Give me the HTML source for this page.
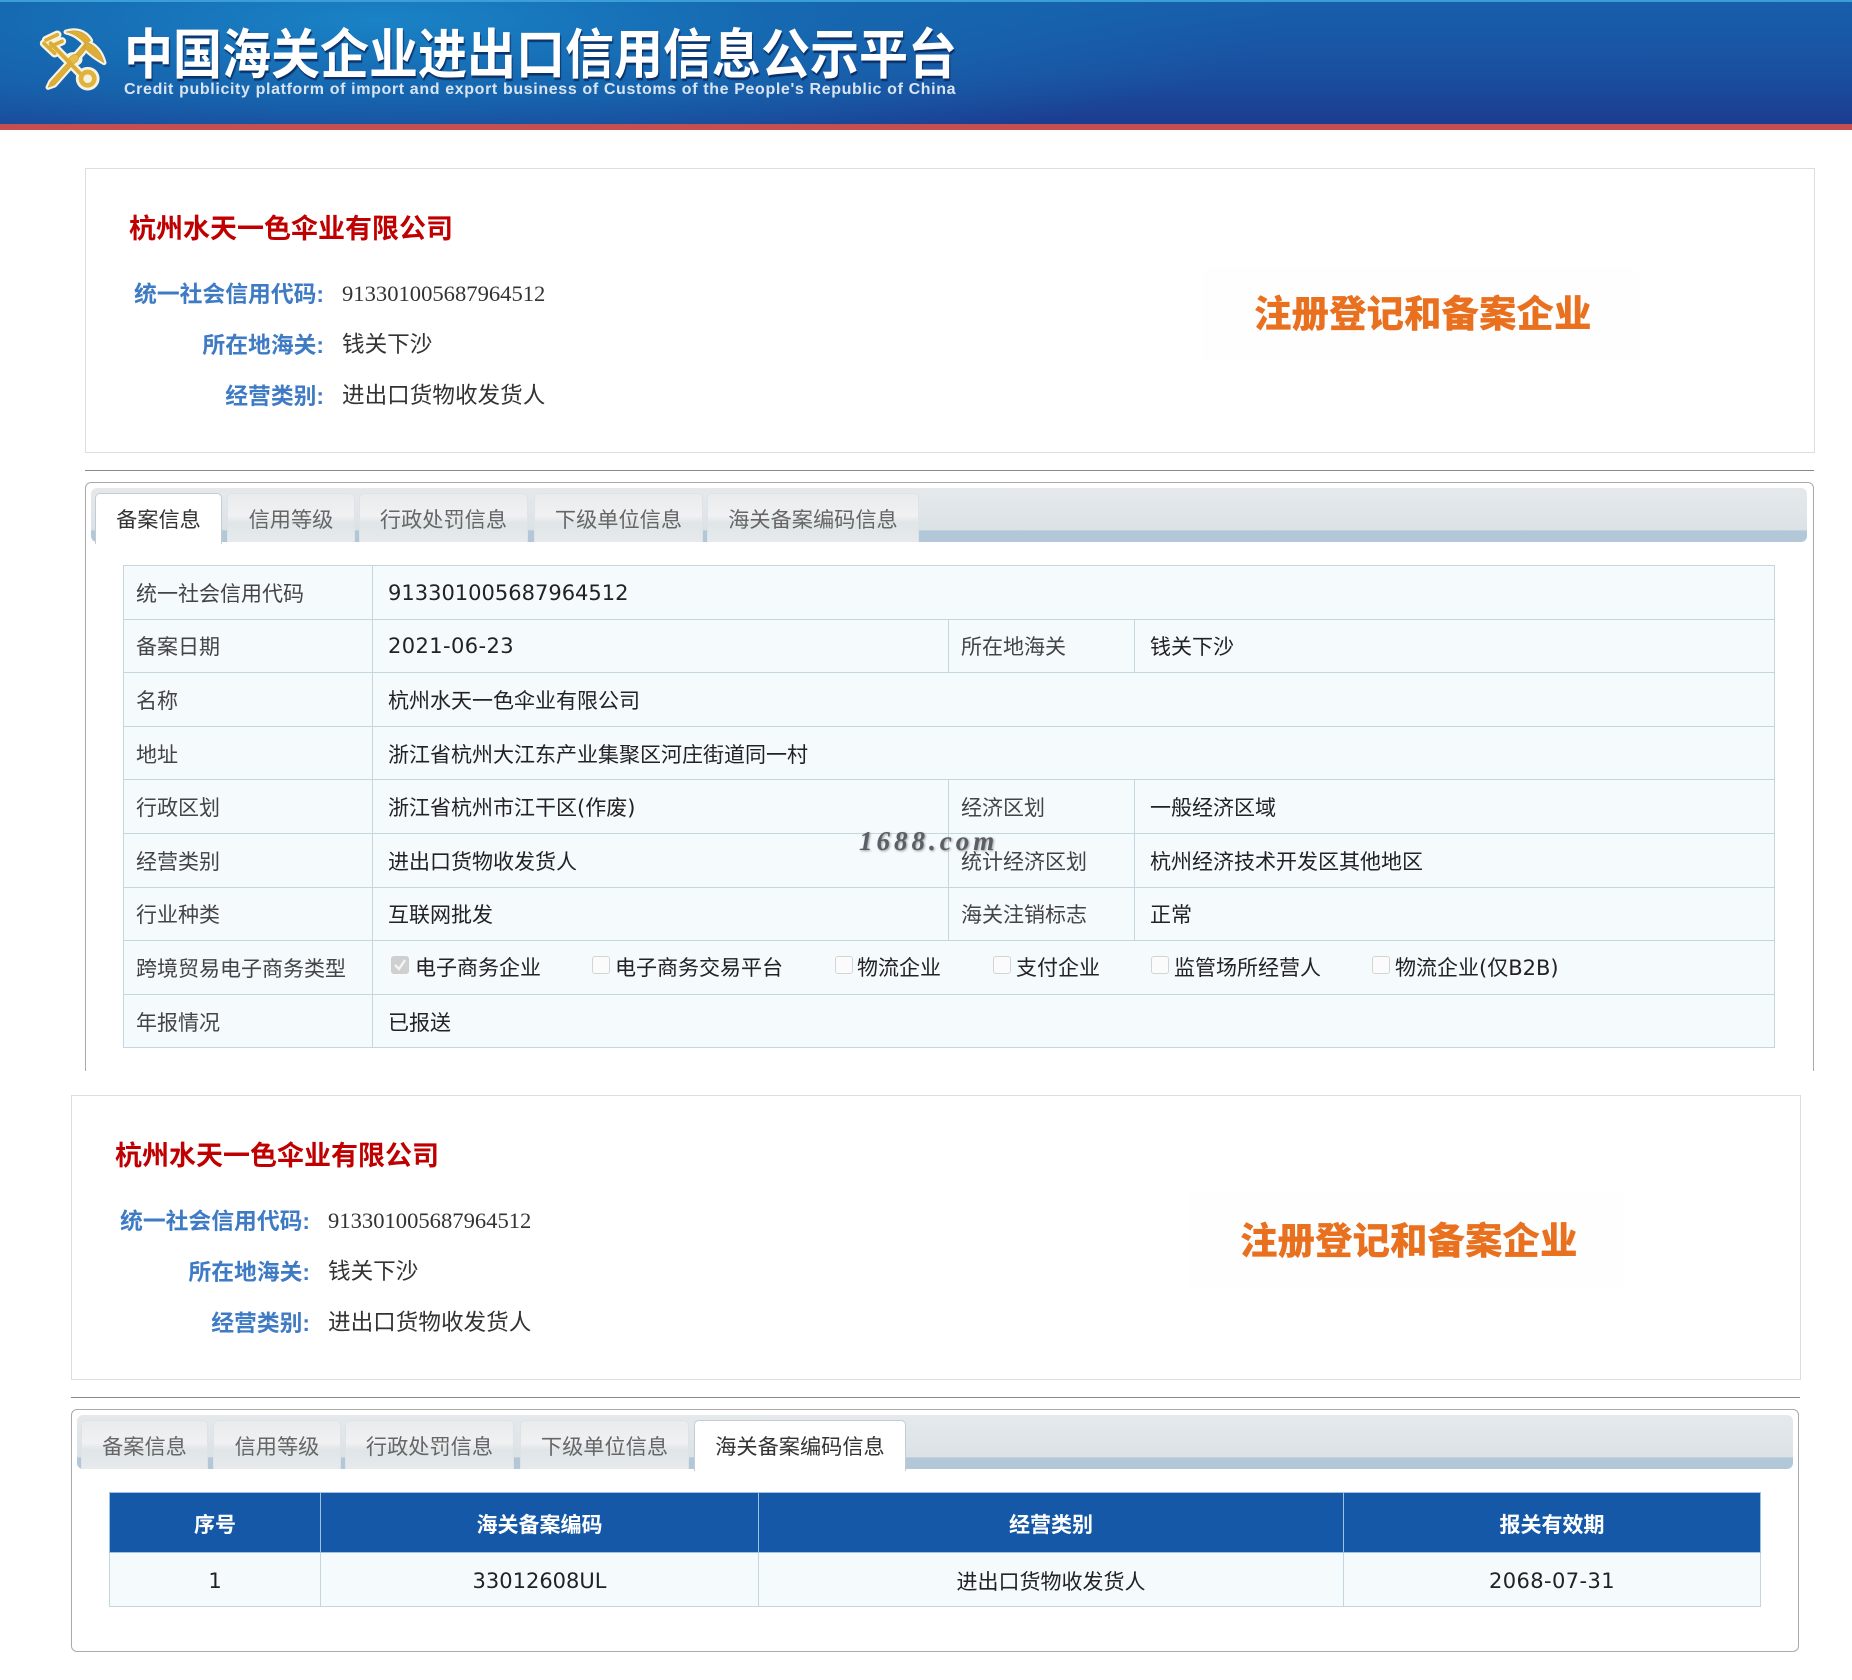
<!DOCTYPE html>
<html lang="zh-CN">
<head>
<meta charset="utf-8">
<title>中国海关企业进出口信用信息公示平台</title>
<style>
html,body{margin:0;padding:0;background:#fff}
body{position:relative;width:1852px;height:1680px;overflow:hidden;font-family:"Liberation Sans","Noto Sans CJK SC",sans-serif;color:#333}
.a{position:absolute;box-sizing:border-box}
.t{position:absolute;white-space:nowrap;line-height:0}
#hd{left:0;top:0;width:1852px;height:124px;background:radial-gradient(ellipse 900px 150px at 380px 20px,#1a82c6 0%,#1668b0 45%,rgba(22,90,165,0) 100%),linear-gradient(180deg,#1760ac 0%,#1a4f9f 60%,#1c3c90 100%)}
#hdtop{left:0;top:0;width:1852px;height:2px;background:#3a9ed8}
#hdred{left:0;top:124px;width:1852px;height:6px;background:#c44e50}
#ttl{left:124px;top:56px;font-size:49px;font-weight:700;color:#fff;text-shadow:1px 2px 1px rgba(10,30,80,.75);transform:scaleY(1.1);transform-origin:0 0}
#sub{left:124px;top:90px;font-size:16px;font-weight:700;color:#d8e4f2;letter-spacing:.63px}
.card{border:1px solid #ddd;background:#fff}
.name{font-size:27px;font-weight:700;color:#c00000}
.lb{font-size:22.8px;font-weight:700;color:#3f7bc4;text-align:right}
.val{font-size:22.6px;color:#333}
.num{font-family:"Liberation Serif",serif}
.stamp{font-size:37.5px;font-weight:900;color:#e8701f}
.fade{background:#fefefe}
.hr{height:1px;background:#888}
.box{border:1px solid #aaa;border-radius:6px;background:#fff}
.bar{border-radius:6px;background:linear-gradient(180deg,#e5e9ec 0%,#dbe2e6 78%,#b2c8d8 79%,#b2c8d8 100%)}
.tab{border:1px solid #dfe3e6;border-bottom:0;border-radius:5px 5px 0 0;background:linear-gradient(180deg,#e9ebec 0%,#f0f1f2 45%,#e0e5e8 60%,#e6eaec 100%);color:#666;font-size:21.2px;text-align:center;line-height:53px}
.tab.on{background:#fff;border-color:#c3ccd2;color:#333}
table{position:absolute;border-collapse:collapse;table-layout:fixed;background:#f5fafd;font-family:"DejaVu Sans","Noto Sans CJK SC",sans-serif;font-size:21px;color:#333}
td,th{border:1px solid #c6d6df;padding:0;white-space:nowrap;box-sizing:border-box}
.d tr{height:53.6px}
.d td{padding-top:1px}
.d td.l{padding-left:12px;color:#444}
.d td.v{padding-left:15px;color:#222}
.dj{font-size:21px;color:#111}
.dt{letter-spacing:.4px}
.cb{position:absolute;width:18px;height:18px;border:1px solid #d4d4d4;border-radius:3px;background:#fbfbfb;box-sizing:border-box}
.cb.on{background:#cfcfcf;border-color:#cfcfcf}
.ck{font-family:"DejaVu Sans","Noto Sans CJK SC",sans-serif;font-size:21px;color:#222}
.s th{background:#1558a8;color:#fff;font-weight:700;font-size:21px;border-color:#9dc3e0;height:60px;padding-top:2px}
.s td{text-align:center;height:54px;color:#222;padding-top:2px}
#wm{left:859px;top:841px;font-family:"Liberation Serif",serif;font-style:italic;font-weight:700;font-size:27px;letter-spacing:4px;color:#5a5f66;text-shadow:1px 1px 2px #999}
</style>
</head>
<body>
<div class="a" id="hd"></div><div class="a" id="hdtop"></div><div class="a" id="hdred"></div>
<svg class="a" style="left:20px;top:10px" width="120" height="90" viewBox="0 0 360 270">
<g stroke="#f6f2e4" stroke-width="15" stroke-linejoin="round" stroke-linecap="round" fill="#f6f2e4">
<path d="M84 232 L92 215 L180 118 L195 100 L203 110 L190 128 L104 225 Z"/>
<path d="M196 102 C178 82 160 70 138 66 C165 58 195 62 212 92 Z"/>
<path d="M204 98 C228 108 244 128 252 158 C232 146 212 134 192 112 Z"/>
<path d="M92 100 L180 190" fill="none" stroke-width="26"/>
<path d="M78 90 L112 74 M94 108 L126 94 M72 100 L104 130" fill="none" stroke-width="25"/>
<circle cx="203" cy="206" r="28"/>
<ellipse cx="160" cy="148" rx="20" ry="14"/>
</g>
<g fill="#dcae35" stroke="#c2902a" stroke-width="1.5" stroke-linejoin="round">
<path d="M84 232 L92 215 L180 118 L195 100 L203 110 L190 128 L104 225 Z"/>
<path d="M196 102 C178 82 160 70 138 66 C165 58 195 62 212 92 Z"/>
<path d="M204 98 C228 108 244 128 252 158 C232 146 212 134 192 112 Z"/>
<ellipse cx="160" cy="148" rx="19" ry="12" transform="rotate(-40 160 148)" fill="#e6bc4a"/>
</g>
<g fill="none" stroke="#dcae35" stroke-linecap="round">
<path d="M92 100 L180 190" stroke-width="12"/>
<path d="M78 90 L112 74 M94 108 L126 94 M72 100 L104 130" stroke-width="11"/>
<circle cx="203" cy="206" r="20" stroke-width="14" stroke="#e0b43c"/>
</g>
</svg>
<div class="t" id="ttl">中国海关企业进出口信用信息公示平台</div>
<div class="t" id="sub">Credit publicity platform of import and export business of Customs of the People's Republic of China</div>

<!-- first card -->
<div class="a card" style="left:85px;top:168px;width:1730px;height:285px"></div>
<div class="t name" style="left:129px;top:229px">杭州水天一色伞业有限公司</div>
<div class="t lb" style="left:0;width:324px;top:294px">统一社会信用代码:</div>
<div class="t val num" style="left:342px;top:294px">913301005687964512</div>
<div class="t lb" style="left:0;width:324px;top:345px">所在地海关:</div>
<div class="t val" style="left:342px;top:345px">钱关下沙</div>
<div class="t lb" style="left:0;width:324px;top:396px">经营类别:</div>
<div class="t val" style="left:342px;top:396px">进出口货物收发货人</div>
<div class="a fade" style="left:1202px;top:266px;width:437px;height:94px"></div>
<div class="t stamp" style="left:1254px;top:314px">注册登记和备案企业</div>
<div class="a hr" style="left:85px;top:470px;width:1729px"></div>

<!-- first tabs -->
<div class="a box" style="left:85px;top:482px;width:1729px;height:610px"></div>
<div class="a" style="left:0;top:1071px;width:1852px;height:24px;background:#fff"></div>
<div class="a bar" style="left:91px;top:488px;width:1716px;height:54px"></div>
<div class="a tab on" style="left:95px;top:493px;width:127px;height:51px">备案信息</div>
<div class="a tab" style="left:227px;top:493px;width:128px;height:49px">信用等级</div>
<div class="a tab" style="left:359px;top:493px;width:169px;height:49px">行政处罚信息</div>
<div class="a tab" style="left:534px;top:493px;width:169px;height:49px">下级单位信息</div>
<div class="a tab" style="left:707px;top:493px;width:212px;height:49px">海关备案编码信息</div>

<table class="d" style="left:123px;top:565px;width:1651px">
<colgroup><col style="width:249px"><col style="width:576px"><col style="width:186px"><col style="width:640px"></colgroup>
<tr><td class="l">统一社会信用代码</td><td class="v dj" colspan="3">913301005687964512</td></tr>
<tr><td class="l">备案日期</td><td class="v dj dt">2021-06-23</td><td class="l">所在地海关</td><td class="v">钱关下沙</td></tr>
<tr><td class="l">名称</td><td class="v" colspan="3">杭州水天一色伞业有限公司</td></tr>
<tr><td class="l">地址</td><td class="v" colspan="3">浙江省杭州大江东产业集聚区河庄街道同一村</td></tr>
<tr><td class="l">行政区划</td><td class="v">浙江省杭州市江干区(作废)</td><td class="l">经济区划</td><td class="v">一般经济区域</td></tr>
<tr><td class="l">经营类别</td><td class="v">进出口货物收发货人</td><td class="l">统计经济区划</td><td class="v">杭州经济技术开发区其他地区</td></tr>
<tr><td class="l">行业种类</td><td class="v">互联网批发</td><td class="l">海关注销标志</td><td class="v">正常</td></tr>
<tr><td class="l">跨境贸易电子商务类型</td><td class="v" colspan="3"></td></tr>
<tr><td class="l">年报情况</td><td class="v" colspan="3">已报送</td></tr>
</table>
<div class="cb on" style="left:391px;top:956px"></div>
<svg class="a" style="left:391px;top:956px" width="18" height="18" viewBox="0 0 18 18"><path d="M4 9 L8 13 L14 4" fill="none" stroke="#f4f4f4" stroke-width="2.4"/></svg>
<div class="t ck" style="left:415px;top:968px">电子商务企业</div>
<div class="cb" style="left:592px;top:956px"></div><div class="t ck" style="left:615px;top:968px">电子商务交易平台</div>
<div class="cb" style="left:835px;top:956px"></div><div class="t ck" style="left:857px;top:968px">物流企业</div>
<div class="cb" style="left:993px;top:956px"></div><div class="t ck" style="left:1016px;top:968px">支付企业</div>
<div class="cb" style="left:1151px;top:956px"></div><div class="t ck" style="left:1174px;top:968px">监管场所经营人</div>
<div class="cb" style="left:1372px;top:956px"></div><div class="t ck" style="left:1395px;top:968px">物流企业(仅B2B)</div>
<div class="t" id="wm">1688.com</div>

<!-- second card -->
<div class="a card" style="left:71px;top:1095px;width:1730px;height:285px"></div>
<div class="t name" style="left:115px;top:1156px">杭州水天一色伞业有限公司</div>
<div class="t lb" style="left:0;width:310px;top:1221px">统一社会信用代码:</div>
<div class="t val num" style="left:328px;top:1221px">913301005687964512</div>
<div class="t lb" style="left:0;width:310px;top:1272px">所在地海关:</div>
<div class="t val" style="left:328px;top:1272px">钱关下沙</div>
<div class="t lb" style="left:0;width:310px;top:1323px">经营类别:</div>
<div class="t val" style="left:328px;top:1323px">进出口货物收发货人</div>
<div class="a fade" style="left:1188px;top:1193px;width:437px;height:94px"></div>
<div class="t stamp" style="left:1240px;top:1241px">注册登记和备案企业</div>
<div class="a hr" style="left:71px;top:1397px;width:1729px"></div>

<!-- second tabs -->
<div class="a box" style="left:71px;top:1409px;width:1728px;height:243px"></div>
<div class="a bar" style="left:77px;top:1415px;width:1716px;height:54px"></div>
<div class="a tab" style="left:81px;top:1420px;width:127px;height:49px">备案信息</div>
<div class="a tab" style="left:213px;top:1420px;width:128px;height:49px">信用等级</div>
<div class="a tab" style="left:345px;top:1420px;width:169px;height:49px">行政处罚信息</div>
<div class="a tab" style="left:520px;top:1420px;width:169px;height:49px">下级单位信息</div>
<div class="a tab on" style="left:694px;top:1420px;width:212px;height:51px">海关备案编码信息</div>

<table class="s" style="left:109px;top:1492px;width:1651px">
<colgroup><col style="width:211px"><col style="width:438px"><col style="width:585px"><col style="width:417px"></colgroup>
<tr><th>序号</th><th>海关备案编码</th><th>经营类别</th><th>报关有效期</th></tr>
<tr><td class="dj">1</td><td class="dj">33012608UL</td><td>进出口货物收发货人</td><td class="dj dt">2068-07-31</td></tr>
</table>
</body>
</html>
